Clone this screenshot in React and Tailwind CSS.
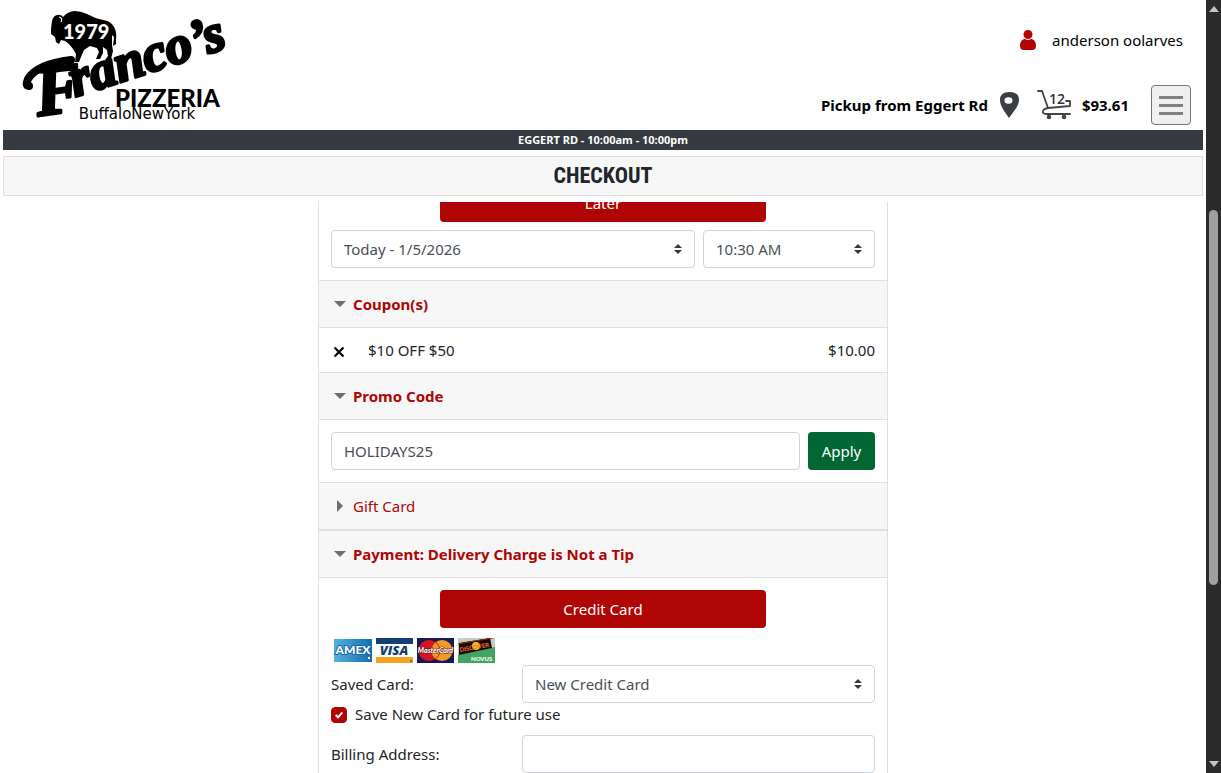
import { useState } from 'react'

const hours = 'EGGERT RD - 10:00am - 10:00pm'

function Logo() {
  return (
    <svg viewBox="0 0 204 116" className="w-[204px] h-[116px] overflow-visible" role="img" aria-label="Franco's Pizzeria">
      <path
        d="M28 19 L29 11 Q30 6 34 5 Q38 4 40 7 Q44 2 51 1 Q58 1 64 4 Q71 8 80 10 Q88 11 91 17 Q94 22 93 29 L93 34 L90 36 L91 27 L89 25 L89 35 L90 41 L88 49 L85 51 L82 50 L85 46 L84 40 L80 37 L80 43 L77 49 L73 49 L76 42 L74 38 L67 36 L61 40 L58 47 L56 52 L52 52 L53 44 L50 39 L46 34 L42 31 L38 30 L36 34 L33 32 L32 27 L28 24 Z"
        fill="#000"
      />
      <path d="M36 7 q4 1 2 5" fill="none" stroke="#fff" strokeWidth="1.2" />
      <text x="40" y="29" fontFamily="Lato, sans-serif" fontWeight="900" fontSize="20" fill="#fff">1979</text>
      <g
        fontFamily="'Liberation Serif', serif"
        fontWeight="700"
        fontStyle="italic"
        stroke="#000"
        strokeWidth="3"
        strokeLinejoin="round"
      >
        <text x="15" y="106" fontSize="70" transform="rotate(-8 15 106)">F</text>
        <text x="52" y="87" fontSize="53" transform="rotate(-18 52 87)">ranco’s</text>
      </g>
      <path d="M6 76 Q2 76 5 69 Q14 54 48 50" fill="none" stroke="#000" strokeWidth="8" strokeLinecap="round" />
      <text x="92" y="97" fontFamily="Lato, sans-serif" fontWeight="900" fontSize="24">PIZZERIA</text>
      <text x="114" y="109" textAnchor="middle" fontFamily="'DejaVu Sans', sans-serif" fontSize="15">BuffaloNewYork</text>
    </svg>
  )
}

function PersonIcon() {
  return (
    <svg viewBox="0 0 16 20" className="w-4 h-5" fill="#b30303" aria-hidden="true">
      <circle cx="8" cy="4.5" r="4.5" />
      <path d="M0 15.5 C0 11 3 9 5 9 Q8 11 11 9 C13 9 16 11 16 15.5 Q16 20 12 20 H4 Q0 20 0 15.5 Z" />
    </svg>
  )
}

function PinIcon() {
  return (
    <svg viewBox="0 0 19 26" className="w-[19px] h-[26px]" aria-hidden="true">
      <path d="M9.500 0 Q19 0 19 8 C19 14 13 20 9 26 C5 20 0 14 0 8 Q0 0 9.500 0 Z" fill="#3b3e43" />
      <ellipse cx="8.500" cy="8.500" rx="4" ry="3.200" fill="#fff" />
    </svg>
  )
}

function CartIcon({ count }) {
  return (
    <svg viewBox="0 0 34 30" className="w-[34px] h-[30px]" aria-hidden="true">
      <g fill="none" stroke="#444" strokeWidth="1.800" strokeLinecap="round" strokeLinejoin="round">
        <path d="M1 1 H5 L11 18 M29 11 H33 V16 L11 18 C5 19 4 24 9 24 H33" />
      </g>
      <circle cx="12" cy="27" r="2.300" fill="#444" />
      <circle cx="27" cy="27" r="2.300" fill="#444" />
      <text x="12" y="14" fontFamily="'Open Sans', sans-serif" fontWeight="600" fontSize="14" fill="#333">{count}</text>
    </svg>
  )
}

function CardLogos() {
  return (
    <div className="flex gap-1 pl-[3px]">
      <svg viewBox="0 0 38 25" className="w-[38px] h-[25px]" role="img" aria-label="American Express">
        <defs>
          <linearGradient id="amex" x1="0" x2="1">
            <stop offset="0" stopColor="#53b2df" />
            <stop offset="1" stopColor="#126db0" />
          </linearGradient>
        </defs>
        <rect y="1" width="38" height="23" fill="url(#amex)" />
        <text x="19" y="16" textAnchor="middle" fontFamily="Lato, sans-serif" fontWeight="900" fontSize="12" fill="#fff" stroke="#1867a5" strokeWidth="2" paintOrder="stroke">AMEX</text>
        <circle cx="35" cy="20" r="1.200" fill="#fff" />
      </svg>
      <svg viewBox="0 0 37 25" className="w-[37px] h-[25px]" role="img" aria-label="Visa">
        <rect width="37" height="25" fill="#fff" />
        <rect width="37" height="6" fill="#123f76" />
        <rect y="19" width="37" height="6" fill="#f4a020" />
        <text x="18" y="17" textAnchor="middle" fontFamily="'Open Sans', sans-serif" fontWeight="800" fontStyle="italic" fontSize="13" fill="#143d70">VISA</text>
        <circle cx="35" cy="23" r="1" fill="#7c4a10" />
      </svg>
      <svg viewBox="0 0 37 25" className="w-[37px] h-[25px]" role="img" aria-label="MasterCard">
        <rect width="37" height="25" fill="#14195e" />
        <circle cx="12" cy="12.500" r="10.500" fill="#d5161c" />
        <circle cx="25" cy="12.500" r="10.500" fill="#f29a27" />
        <path d="M18.500 4 a10.500 10.500 0 0 1 0 17" fill="none" stroke="#d5161c" strokeWidth="1" />
        <text x="18.500" y="15" textAnchor="middle" fontFamily="Lato, sans-serif" fontWeight="900" fontStyle="italic" fontSize="7" fill="#fff" stroke="#5b1420" strokeWidth="1" paintOrder="stroke">MasterCard</text>
      </svg>
      <svg viewBox="0 0 37 25" className="w-[37px] h-[25px]" role="img" aria-label="Discover Novus">
        <rect width="37" height="25" fill="#bfd0c2" />
        <path d="M0 17 L37 9 V25 H0 Z" fill="#43a564" />
        <path d="M1 5 L32 0 L34 10 L1 17 Z" fill="#130b06" />
        <circle cx="18" cy="8" r="4" fill="#f0c51b" />
        <text x="2" y="14" transform="rotate(-10 2 14)" fontFamily="Lato, sans-serif" fontWeight="900" fontSize="6" fill="#f4682a">DISCOVER</text>
        <text x="13" y="23" fontFamily="Lato, sans-serif" fontWeight="900" fontSize="6" fill="#fff">NOVUS</text>
        <path d="M0 6 L35 0" stroke="#a32018" strokeWidth="1" />
      </svg>
    </div>
  )
}

function Select({ id, label, options }) {
  return (
    <div className="relative">
      <select
        id={id}
        aria-label={label}
        className="block w-full h-[38px] appearance-none rounded border border-[#ced4da] bg-white pl-3 pr-8 text-[#495057]"
      >
        {options.map((o) => (
          <option key={o}>{o}</option>
        ))}
      </select>
      <svg viewBox="0 0 8 10" className="absolute right-[13px] top-[14px] w-2 h-[10px] pointer-events-none" fill="#343a40" aria-hidden="true">
        <path d="M4 0 L8 4 H0 Z M0 6 H8 L4 10 Z" />
      </svg>
    </div>
  )
}

function Section({ title, defaultOpen = true, children }) {
  const [open, setOpen] = useState(defaultOpen)

  return (
    <section>
      <h2 className="border-y border-[#dfdfdf] bg-[#f7f7f7]">
        <button
          type="button"
          aria-expanded={open}
          onClick={() => setOpen(!open)}
          className={`flex w-full h-[46px] items-center gap-[6px] px-[15px] text-left text-[#ad0505] ${open ? 'font-bold' : ''}`}
        >
          <svg viewBox="0 0 13 12" className="w-[13px] h-3" fill="#6e6e6e" aria-hidden="true">
            {open ? <path d="M0 3 H12 L6 9 Z" /> : <path d="M3 0 L9 6 L3 12 Z" />}
          </svg>
          {title}
        </button>
      </h2>
      {open && children}
    </section>
  )
}

function Header() {
  return (
    <header className="flex h-[130px] justify-between pl-5 pr-3">
      <a href="#home" className="mt-[10px] self-start">
        <Logo />
      </a>
      <div className="flex flex-col items-end justify-between pt-7 pb-[5px] text-black">
        <a href="#account" className="flex items-center gap-4 pr-2">
          <PersonIcon />
          anderson oolarves
        </a>
        <div className="flex items-center">
          <a href="#location" className="flex items-center gap-3 font-bold">
            Pickup from Eggert Rd
            <PinIcon />
          </a>
          <a href="#cart" className="ml-[18px] flex items-center gap-[11px] font-bold">
            <CartIcon count={12} />
            $93.61
          </a>
          <button
            type="button"
            aria-label="Menu"
            className="ml-[22px] flex size-10 flex-col items-center justify-center gap-[5px] rounded border border-[#767676] bg-[#efefef]"
          >
            <span className="h-[3px] w-6 bg-[#808080]" />
            <span className="h-[3px] w-6 bg-[#808080]" />
            <span className="h-[3px] w-6 bg-[#808080]" />
          </button>
        </div>
      </div>
    </header>
  )
}

function Checkout() {
  const [promo, setPromo] = useState('HOLIDAYS25')

  return (
    <div className="mx-auto w-full max-w-[570px] border-x border-[#dfdfdf]">
      <div className="px-3 pb-3">
        <button type="button" className="-mt-[18px] mx-auto block h-[38px] w-3/5 rounded bg-[#b00505] text-white">
          Later
        </button>
        <div className="mt-2 grid grid-cols-[364fr_172fr] gap-2">
          <Select id="day" label="Day" options={['Today - 1/5/2026']} />
          <Select id="time" label="Time" options={['10:30 AM']} />
        </div>
      </div>

      <Section title="Coupon(s)">
        <div className="flex h-11 items-center px-3">
          <button type="button" aria-label="Remove coupon" className="flex w-[37px] items-center pt-[3px] pl-[3px]">
            <svg viewBox="0 0 10 10" className="size-[10px]" stroke="#000" strokeWidth="2.200" aria-hidden="true">
              <path d="M0.500 0.500 L9.500 9.500 M9.500 0.500 L0.500 9.500" />
            </svg>
          </button>
          <span className="flex-1">$10 OFF $50</span>
          <span>$10.00</span>
        </div>
      </Section>

      <Section title="Promo Code">
        <div className="flex gap-2 p-3">
          <input
            type="text"
            aria-label="Promo code"
            value={promo}
            onChange={(e) => setPromo(e.target.value)}
            className="h-[38px] min-w-0 flex-1 rounded border border-[#ced4da] px-3 text-[#495057]"
          />
          <button type="button" className="h-[38px] w-[67px] rounded bg-[#006633] text-white">
            Apply
          </button>
        </div>
      </Section>

      <Section title="Gift Card" defaultOpen={false}>
        <div className="p-3">
          <input type="text" aria-label="Gift card number" className="h-[38px] w-full rounded border border-[#ced4da] px-3" />
        </div>
      </Section>

      <Section title="Payment: Delivery Charge is Not a Tip">
        <div className="px-3 pt-3">
          <button type="button" className="mx-auto block h-[38px] w-3/5 rounded bg-[#b00505] text-white">
            Credit Card
          </button>
          <div className="mt-[10px]">
            <CardLogos />
          </div>
          <div className="mt-[2px] grid grid-cols-[191fr_353fr] items-center">
            <label htmlFor="saved">Saved Card:</label>
            <Select id="saved" label="Saved card" options={['New Credit Card']} />
          </div>
          <div className="flex h-[22px] items-center gap-2">
            <span className="relative mt-[2px] size-4">
              <input id="save" type="checkbox" defaultChecked className="peer block size-4 appearance-none rounded border border-[#b00505] checked:bg-[#b00505]" />
              <svg viewBox="0 0 8 8" className="absolute left-1 top-1 hidden size-2 pointer-events-none peer-checked:block" fill="none" stroke="#fff" strokeWidth="2" aria-hidden="true">
                <path d="M0.700 4 L3 6.300 L7.300 1.500" />
              </svg>
            </span>
            <label htmlFor="save">Save New Card for future use</label>
          </div>
          <div className="mt-[10px] grid grid-cols-[191fr_353fr] items-center">
            <label htmlFor="address">Billing Address:</label>
            <input id="address" type="text" className="h-[38px] w-full rounded border border-[#ced4da] px-3" />
          </div>
        </div>
      </Section>
    </div>
  )
}

function ScrollTrack() {
  return (
    <div className="flex w-[15px] shrink-0 flex-col items-center bg-[#2b2b2b] py-[6px]" aria-hidden="true">
      <svg viewBox="0 0 10 6" className="w-[10px] h-[6px]" fill="#c4c4c4">
        <path d="M5 0 L10 6 H0 Z" />
      </svg>
      <div className="flex w-full flex-1 flex-col items-center">
        <div className="flex-[198]" />
        <div className="w-[9px] flex-[375] rounded-full bg-[#9f9f9f]" />
        <div className="flex-[176]" />
      </div>
      <svg viewBox="0 0 10 6" className="w-[10px] h-[6px]" fill="#c4c4c4">
        <path d="M0 0 H10 L5 6 Z" />
      </svg>
    </div>
  )
}

export default function App() {
  return (
    <div className="flex h-screen bg-white font-['Noto_Sans','Open_Sans',sans-serif] text-[15px] leading-6 text-[#212529]">
      <div className="flex min-w-0 flex-1 flex-col overflow-hidden px-[3px]">
        <Header />
        <div className="h-5 shrink-0 bg-[#343a40] text-center text-[11px] leading-5 font-bold text-white">{hours}</div>
        <h1 className="my-[6px] h-10 shrink-0 border border-[#dfdfdf] bg-[#f7f7f7] text-center font-['Roboto_Condensed','Roboto',sans-serif] text-[22px] leading-[38px] font-bold">
          CHECKOUT
        </h1>
        <main className="min-h-0 flex-1 overflow-hidden">
          <Checkout />
        </main>
      </div>
      <ScrollTrack />
    </div>
  )
}
